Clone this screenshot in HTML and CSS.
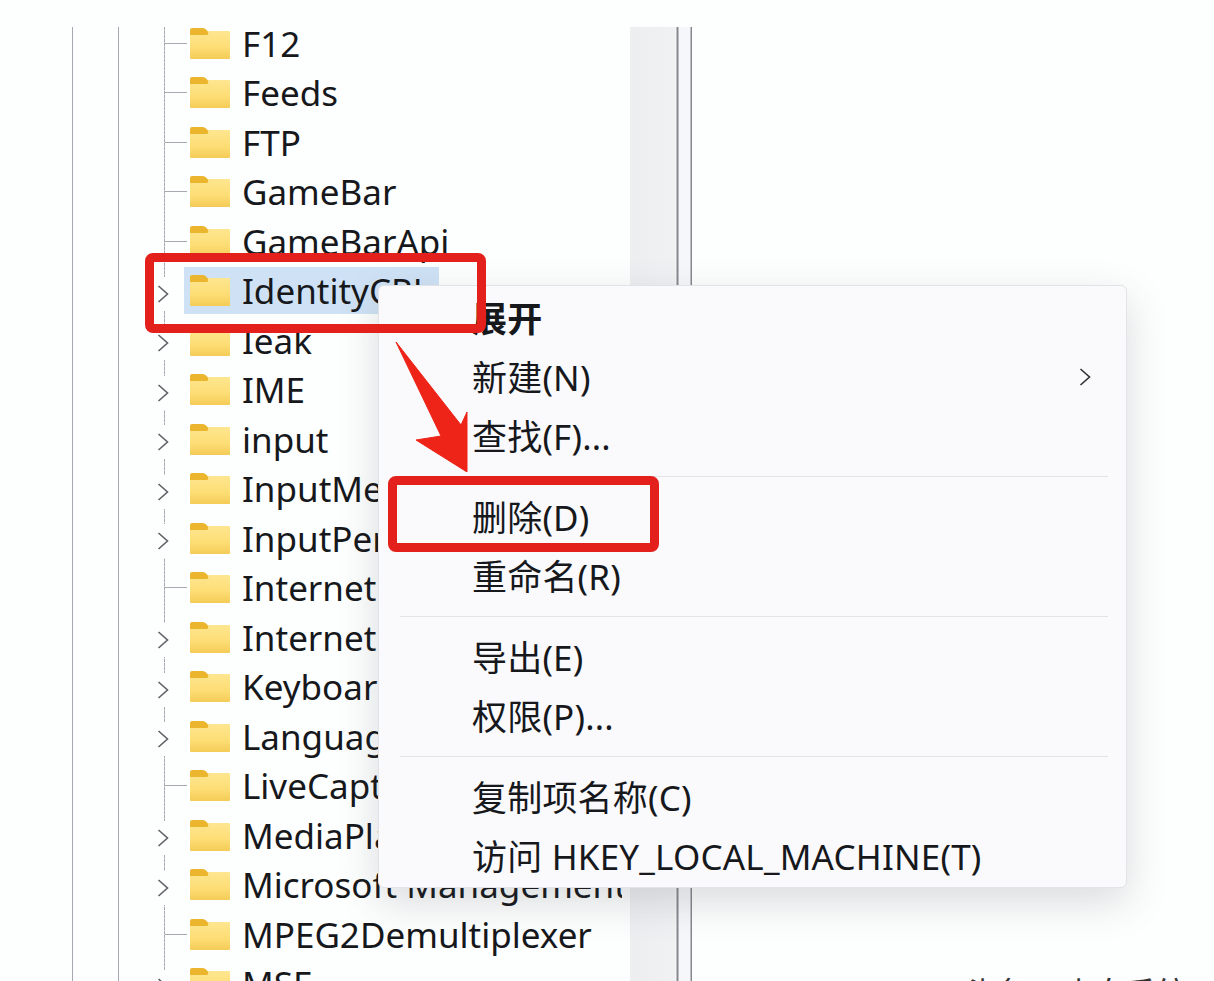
FILE: index.html
```html
<!DOCTYPE html>
<html lang="zh-CN">
<head>
  <meta charset="UTF-8" />
  <title>注册表编辑器</title>
  <link rel="stylesheet" href="styles.css">
</head>
<body>
  <svg class="defs" width="0" height="0">
    <defs>
      <linearGradient id="folderFill" x1="0" y1="0" x2="0" y2="1">
        <stop offset="0" stop-color="#fee690"/>
        <stop offset="0.6" stop-color="#fddd74"/>
        <stop offset="1" stop-color="#f4cb57"/>
      </linearGradient>
      <symbol id="folder" viewBox="0 0 42 33">
        <path d="M1 4h39a1 1 0 0 1 1 1v26a1 1 0 0 1-1 1H2a1 1 0 0 1-1-1z" fill="url(#folderFill)"/>
        <path d="M1 8V3a2 2 0 0 1 2-2h10c3 0 5 2 6 4a2 2 0 0 1-2 3z" fill="#ebb62e"/>
      </symbol>
      <symbol id="chevron" viewBox="0 0 12 20">
        <path d="M1.5 2l9 8-9 8" fill="none" stroke="currentColor" stroke-width="1.6"/>
      </symbol>
    </defs>
  </svg>

  <div class="lines">
    <span class="vline vline-a"></span>
    <span class="vline vline-b"></span>
    <span class="vline vline-c"></span>
  </div>

  <div class="scrollbar"></div>

  <ul class="tree">
    <li class="row leaf"><span class="twig"></span><svg class="folder"><use href="#folder"/></svg><span class="name">F12</span></li>
    <li class="row leaf"><span class="twig"></span><svg class="folder"><use href="#folder"/></svg><span class="name">Feeds</span></li>
    <li class="row leaf"><span class="twig"></span><svg class="folder"><use href="#folder"/></svg><span class="name">FTP</span></li>
    <li class="row leaf"><span class="twig"></span><svg class="folder"><use href="#folder"/></svg><span class="name">GameBar</span></li>
    <li class="row leaf"><span class="twig"></span><svg class="folder"><use href="#folder"/></svg><span class="name">GameBarApi</span></li>
    <li class="row selected"><svg class="chevron"><use href="#chevron"/></svg><svg class="folder"><use href="#folder"/></svg><span class="name">IdentityCRL</span></li>
    <li class="row"><svg class="chevron"><use href="#chevron"/></svg><svg class="folder"><use href="#folder"/></svg><span class="name">Ieak</span></li>
    <li class="row"><svg class="chevron"><use href="#chevron"/></svg><svg class="folder"><use href="#folder"/></svg><span class="name">IME</span></li>
    <li class="row"><svg class="chevron"><use href="#chevron"/></svg><svg class="folder"><use href="#folder"/></svg><span class="name">input</span></li>
    <li class="row"><svg class="chevron"><use href="#chevron"/></svg><svg class="folder"><use href="#folder"/></svg><span class="name">InputMethod</span></li>
    <li class="row"><svg class="chevron"><use href="#chevron"/></svg><svg class="folder"><use href="#folder"/></svg><span class="name">InputPersonalization</span></li>
    <li class="row leaf"><span class="twig"></span><svg class="folder"><use href="#folder"/></svg><span class="name">Internet Account</span></li>
    <li class="row"><svg class="chevron"><use href="#chevron"/></svg><svg class="folder"><use href="#folder"/></svg><span class="name">Internet Explorer</span></li>
    <li class="row"><svg class="chevron"><use href="#chevron"/></svg><svg class="folder"><use href="#folder"/></svg><span class="name">Keyboard</span></li>
    <li class="row"><svg class="chevron"><use href="#chevron"/></svg><svg class="folder"><use href="#folder"/></svg><span class="name">LanguageOverlay</span></li>
    <li class="row leaf"><span class="twig"></span><svg class="folder"><use href="#folder"/></svg><span class="name">LiveCaptions</span></li>
    <li class="row"><svg class="chevron"><use href="#chevron"/></svg><svg class="folder"><use href="#folder"/></svg><span class="name">MediaPlayer</span></li>
    <li class="row"><svg class="chevron"><use href="#chevron"/></svg><svg class="folder"><use href="#folder"/></svg><span class="name">Microsoft Management Console</span></li>
    <li class="row leaf"><span class="twig"></span><svg class="folder"><use href="#folder"/></svg><span class="name">MPEG2Demultiplexer</span></li>
    <li class="row"><svg class="chevron"><use href="#chevron"/></svg><svg class="folder"><use href="#folder"/></svg><span class="name">MSF</span></li>
  </ul>

  <div class="menu">
    <div class="item strong">展开</div>
    <div class="item">新建(N)<svg class="sub-arrow"><use href="#chevron"/></svg></div>
    <div class="item">查找(F)...</div>
    <div class="sep"></div>
    <div class="item">删除(D)</div>
    <div class="item">重命名(R)</div>
    <div class="sep"></div>
    <div class="item">导出(E)</div>
    <div class="item">权限(P)...</div>
    <div class="sep"></div>
    <div class="item">复制项名称(C)</div>
    <div class="item">访问 HKEY_LOCAL_MACHINE(T)</div>
  </div>

  <div class="mark mark-key"></div>
  <div class="mark mark-delete"></div>

  <svg class="arrow" viewBox="0 0 74 131">
    <path d="M2 1 L67 84 L73 71 L73 131 L22 99 L47 95 Z" fill="#ee2418" stroke="#ee2418" stroke-linejoin="round"/>
  </svg>

  <div class="watermark">头条 @小白系统</div>
</body>
</html>
```

FILE: styles.css
```css
* { box-sizing: border-box; }
html, body { height: 100%; }
body {
  margin: 0;
  height: 981px;
  position: relative;
  overflow: hidden;
  background: #fdfefe;
  font-family: "Noto Sans", "Noto Sans CJK SC", sans-serif;
  color: #16181c;
}
.defs { position: absolute; }

.vline { position: absolute; top: 27px; bottom: 0; width: 1px; background: #a6a9b2; }
.vline-a { left: 72px; }
.vline-b { left: 118px; }
.vline-c {
  left: 164px;
  background: repeating-linear-gradient(#a6a9b2 0 3px, #d5d6da 3px 4px);
}

.scrollbar {
  position: absolute;
  left: 630px;
  top: 27px;
  bottom: 0;
  width: 62px;
  background: linear-gradient(to right, #edeef0 0, #f0f1f3 45px, #f8f9fb 46px, #85878d 47px, #85878d 48px, #f6f7fa 49px, #f6f7fa 60px, #85878d 61px);
}

.tree {
  list-style: none;
  position: relative;
  margin: 0;
  padding: 18.5px 0 0 156px;
}
.row {
  height: 49.5px;
  display: flex;
  align-items: center;
  font-size: 35px;
  white-space: nowrap;
}
.chevron {
  width: 12px;
  height: 34px;
  margin: 6px 20px 0 1px;
  flex: none;
  color: #5f6368;
  background: #fdfefe;
}
.twig { width: 22px; height: 1px; margin: 0 2px 0 9px; background: #a6a9b2; flex: none; }
.folder { width: 42px; height: 33px; margin-right: 11px; flex: none; }
.name { line-height: 1.4; width: 380px; overflow: hidden; }
.selected { background: linear-gradient(#cfe2f5, #cfe2f5) 28px 1px / 255px 47px no-repeat; }

.menu {
  position: absolute;
  left: 378px;
  top: 285px;
  width: 749px;
  height: 603px;
  padding: 1px 0 0 93px;
  background: #fafafc;
  border: 1px solid #e2e3e6;
  border-radius: 6px;
  box-shadow: 0 14px 40px rgba(60, 64, 72, 0.18);
  font-size: 35px;
  letter-spacing: 0.2px;
}
.item { height: 59px; display: flex; align-items: center; position: relative; white-space: nowrap; }
.strong { font-weight: 700; }
.sub-arrow { position: absolute; right: 35px; top: 21px; width: 12px; height: 20px; color: #333; }
.sep { height: 1px; margin: 12px 18px 9px -72px; background: #e4e4e7; }

.mark {
  position: absolute;
  border: 9px solid #e3201b;
  border-radius: 8px;
}
.mark-key { left: 145px; top: 253px; width: 341px; height: 80px; }
.mark-delete { left: 388px; top: 476px; width: 271px; height: 76px; }

.arrow { position: absolute; left: 394px; top: 341px; width: 74px; height: 131px; }

.watermark {
  position: absolute;
  left: 965px;
  top: 968px;
  font-size: 31px;
  color: #333;
}
```
